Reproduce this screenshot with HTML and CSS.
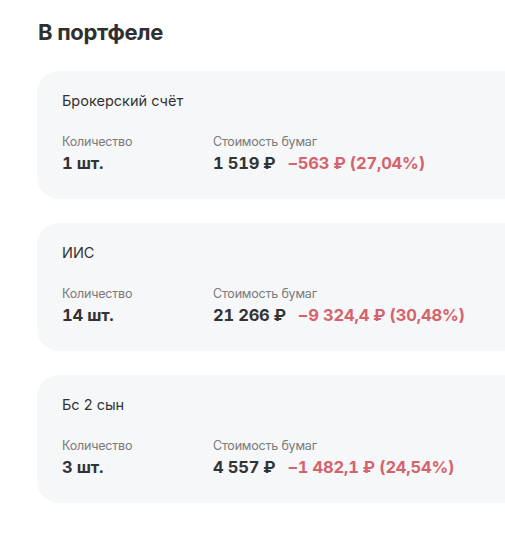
FILE: index.html
```html
<!DOCTYPE html>
<html lang="ru">
<head>
<meta charset="utf-8">
<link rel="stylesheet" href="styles.css">
</head>
<body>
<main class="portfolio">
  <h2 class="portfolio__title">В портфеле</h2>
  <section class="account">
    <div class="account__name">Брокерский счёт</div>
    <div class="account__stats">
      <div class="stat stat--qty">
        <div class="stat__label">Количество</div>
        <div class="stat__value">1 шт.</div>
      </div>
      <div class="stat">
        <div class="stat__label">Стоимость бумаг</div>
        <div class="stat__value">1 519 ₽<span class="stat__change">−563 ₽ (27,04%)</span></div>
      </div>
    </div>
  </section>
  <section class="account">
    <div class="account__name">ИИС</div>
    <div class="account__stats">
      <div class="stat stat--qty">
        <div class="stat__label">Количество</div>
        <div class="stat__value">14 шт.</div>
      </div>
      <div class="stat">
        <div class="stat__label">Стоимость бумаг</div>
        <div class="stat__value">21 266 ₽<span class="stat__change">−9 324,4 ₽ (30,48%)</span></div>
      </div>
    </div>
  </section>
  <section class="account">
    <div class="account__name">Бс 2 сын</div>
    <div class="account__stats">
      <div class="stat stat--qty">
        <div class="stat__label">Количество</div>
        <div class="stat__value">3 шт.</div>
      </div>
      <div class="stat">
        <div class="stat__label">Стоимость бумаг</div>
        <div class="stat__value">4 557 ₽<span class="stat__change">−1 482,1 ₽ (24,54%)</span></div>
      </div>
    </div>
  </section>
</main>
</body>
</html>
```

FILE: styles.css
```css
html, body {
  margin: 0;
  padding: 0;
  background: #ffffff;
}

body {
  font-family: Inter, "Noto Sans", sans-serif;
  color: #333333;
}

.portfolio {
  padding: 18px 0 0 37px;
  display: flex;
  flex-direction: column;
  gap: 24px;
}

.portfolio__title {
  margin: 0 0 1px 1px;
  font-size: 22px;
  line-height: 28px;
  font-weight: 700;
  letter-spacing: -0.3px;
  color: #2f2f2f;
}

/* card runs off the right edge of the viewport */
.account {
  background: #f6f7f8;
  border-radius: 22px 0 0 22px;
  height: 128px;
  box-sizing: border-box;
  padding: 20px 0 0 25px;
}

.account__name {
  font-size: 14.5px;
  line-height: 20px;
  color: #333333;
}

.account__stats {
  display: flex;
  margin-top: 23px;
}

.stat--qty {
  width: 151px;
}

.stat__label {
  font-size: 12.5px;
  line-height: 16px;
  color: #7a7a7a;
  letter-spacing: -0.2px;
}

.stat__value {
  font-size: 16.5px;
  line-height: 22px;
  font-weight: 700;
  color: #333333;
  margin-top: 2px;
  font-variant-numeric: tabular-nums;
  letter-spacing: -0.2px;
}

.stat__change {
  color: #d4636c;
  margin-left: 12px;
}
```
